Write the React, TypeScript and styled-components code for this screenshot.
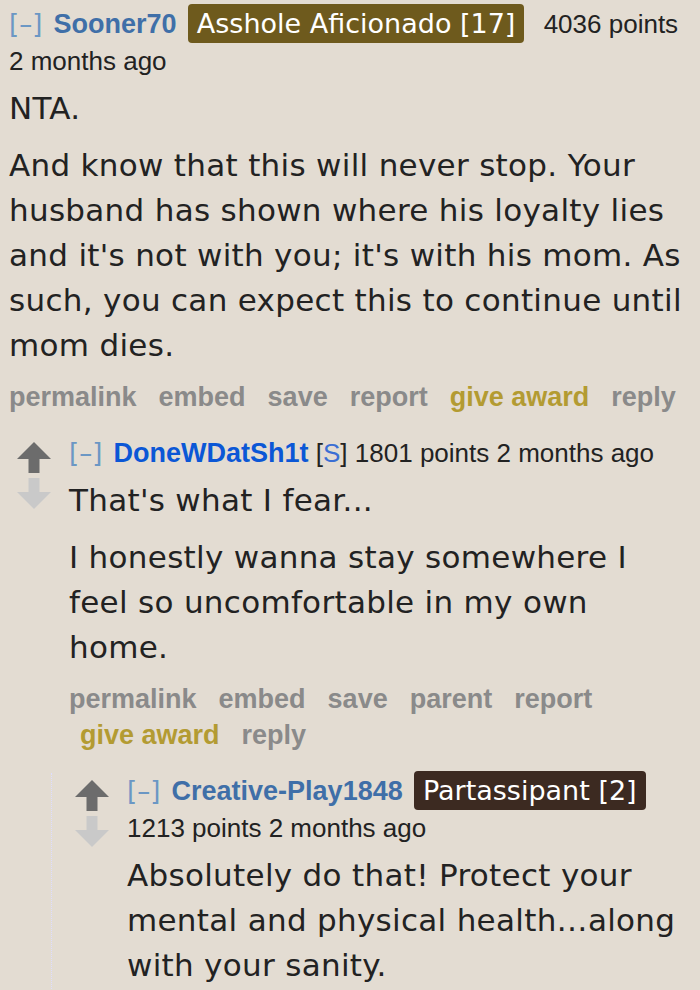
import React from "react";
import styled, { createGlobalStyle, css } from "styled-components";

type Flair = { text: string; bg: string };

type CommentData = {
  id: string;
  author: string;
  submitter?: boolean;
  flair?: Flair;
  points: number;
  age: string;
  body: string[];
  buttons?: string[];
  hideVotes?: boolean;
  childIndent?: number;
  childBorder?: boolean;
  replies?: CommentData[];
};

const GlobalStyle = createGlobalStyle`
  html, body {
    margin: 0;
    padding: 0;
    background: #e3dcd2;
    overflow: hidden;
  }
  body {
    font-family: "DejaVu Sans", Verdana, sans-serif;
    color: #222;
  }
`;

const Page = styled.div`
  padding: 6px 7px 0 9px;
`;

const Row = styled.div`
  display: flex;
  align-items: flex-start;
`;

const Votes = styled.div`
  flex: 0 0 34px;
  display: flex;
  flex-direction: column;
  gap: 5px;
  margin: 7px 18px 0 0;
  svg {
    display: block;
  }
`;

const Entry = styled.div`
  flex: 1;
  min-width: 0;
`;

const Tagline = styled.p`
  margin: 0;
  font-family: "Liberation Sans", Arial, sans-serif;
  font-size: 26px;
  line-height: 37px;
  color: #222;
`;

const Expand = styled.a`
  font-family: "DejaVu Sans", Verdana, sans-serif;
  font-size: 26px;
  line-height: 1;
  color: #6b97c4;
  margin-right: 4px;
`;

const Author = styled.a<{ $submitter?: boolean }>`
  font-weight: bold;
  font-size: 27px;
  text-decoration: none;
  color: ${({ $submitter }) => ($submitter ? "#0b57d6" : "#3f6fa8")};
`;

const Submitter = styled.span`
  color: #222;
  b {
    font-weight: normal;
    color: #3b6fd4;
  }
`;

const FlairBadge = styled.span<{ $bg: string }>`
  font-family: "DejaVu Sans", Verdana, sans-serif;
  font-size: 27px;
  line-height: 1;
  color: #fff;
  background: ${({ $bg }) => $bg};
  border-radius: 4px;
  padding: 4px 9px;
  margin: 0 12px 0 4px;
`;

const Body = styled.div`
  margin-top: 6px;
  font-family: "DejaVu Sans", Verdana, sans-serif;
  font-size: 31px;
  line-height: 45px;
  letter-spacing: 0.3px;
  color: #222;
  p {
    margin: 0 0 12px;
  }
  p:last-child {
    margin-bottom: 0;
  }
`;

const Buttons = styled.ul`
  list-style: none;
  margin: 11px 0 0;
  padding: 0;
  display: flex;
  flex-wrap: wrap;
  font-family: "Liberation Sans", Arial, sans-serif;
  font-size: 27px;
  font-weight: bold;
  line-height: 36px;
`;

const Button = styled.li<{ $award?: boolean }>`
  padding: 0 11px;
  color: ${({ $award }) => ($award ? "#b39b32" : "#8a8a8a")};
  &:first-child {
    padding-left: 0;
  }
  &:last-child {
    padding-right: 0;
  }
`;

const Children = styled.div<{ $indent: number; $bordered?: boolean }>`
  margin: 20px 0 0 ${({ $indent }) => $indent}px;
  ${({ $bordered }) =>
    $bordered &&
    css`
      border-left: 1px dotted #ddf;
      padding-left: 23px;
      min-height: 240px;
    `}
`;

const UpArrow = () => (
  <svg width="34" height="31" viewBox="0 0 34 31">
    <path d="M17 0 L34 17 L22.5 17 L22.5 31 L11.5 31 L11.5 17 L0 17 Z" fill="#6c6c6c" />
  </svg>
);

const DownArrow = () => (
  <svg width="34" height="31" viewBox="0 0 34 31">
    <path d="M11.5 0 L22.5 0 L22.5 14 L34 14 L17 31 L0 14 L11.5 14 Z" fill="#c9c9c9" />
  </svg>
);

const thread: CommentData = {
  id: "c1",
  author: "Sooner70",
  flair: { text: "Asshole Aficionado [17]", bg: "#6e5a1d" },
  points: 4036,
  age: "2 months ago",
  hideVotes: true,
  childIndent: 8,
  body: [
    "NTA.",
    "And know that this will never stop. Your husband has shown where his loyalty lies and it's not with you; it's with his mom. As such, you can expect this to continue until mom dies.",
  ],
  buttons: ["permalink", "embed", "save", "report", "give award", "reply"],
  replies: [
    {
      id: "c2",
      author: "DoneWDatSh1t",
      submitter: true,
      points: 1801,
      age: "2 months ago",
      childIndent: 34,
      childBorder: true,
      body: [
        "That's what I fear...",
        "I honestly wanna stay somewhere I feel so uncomfortable in my own home.",
      ],
      buttons: ["permalink", "embed", "save", "parent", "report", "give award", "reply"],
      replies: [
        {
          id: "c3",
          author: "Creative-Play1848",
          flair: { text: "Partassipant [2]", bg: "#3c2a21" },
          points: 1213,
          age: "2 months ago",
          body: [
            "Absolutely do that! Protect your mental and physical health\u2026along with your sanity.",
          ],
        },
      ],
    },
  ],
};

const Comment = ({ data }: { data: CommentData }) => (
  <div>
    <Row>
      {!data.hideVotes && (
        <Votes>
          <UpArrow />
          <DownArrow />
        </Votes>
      )}
      <Entry>
        <Tagline>
          <Expand>[–]</Expand> <Author $submitter={data.submitter}>{data.author}</Author>{" "}
          {data.submitter && (
            <>
              <Submitter>
                [<b>S</b>]
              </Submitter>{" "}
            </>
          )}
          {data.flair && <FlairBadge $bg={data.flair.bg}>{data.flair.text}</FlairBadge>}
          {data.flair && " "}
          {data.points} points {data.age}
        </Tagline>
        <Body>
          {data.body.map((para, i) => (
            <p key={i}>{para}</p>
          ))}
        </Body>
        {data.buttons && (
          <Buttons>
            {data.buttons.map((b) => (
              <Button key={b} $award={b === "give award"}>
                {b}
              </Button>
            ))}
          </Buttons>
        )}
      </Entry>
    </Row>
    {data.replies && (
      <Children $indent={data.childIndent ?? 0} $bordered={data.childBorder}>
        {data.replies.map((r) => (
          <Comment key={r.id} data={r} />
        ))}
      </Children>
    )}
  </div>
);

const App = () => (
  <>
    <GlobalStyle />
    <Page>
      <Comment data={thread} />
    </Page>
  </>
);

export default App;
